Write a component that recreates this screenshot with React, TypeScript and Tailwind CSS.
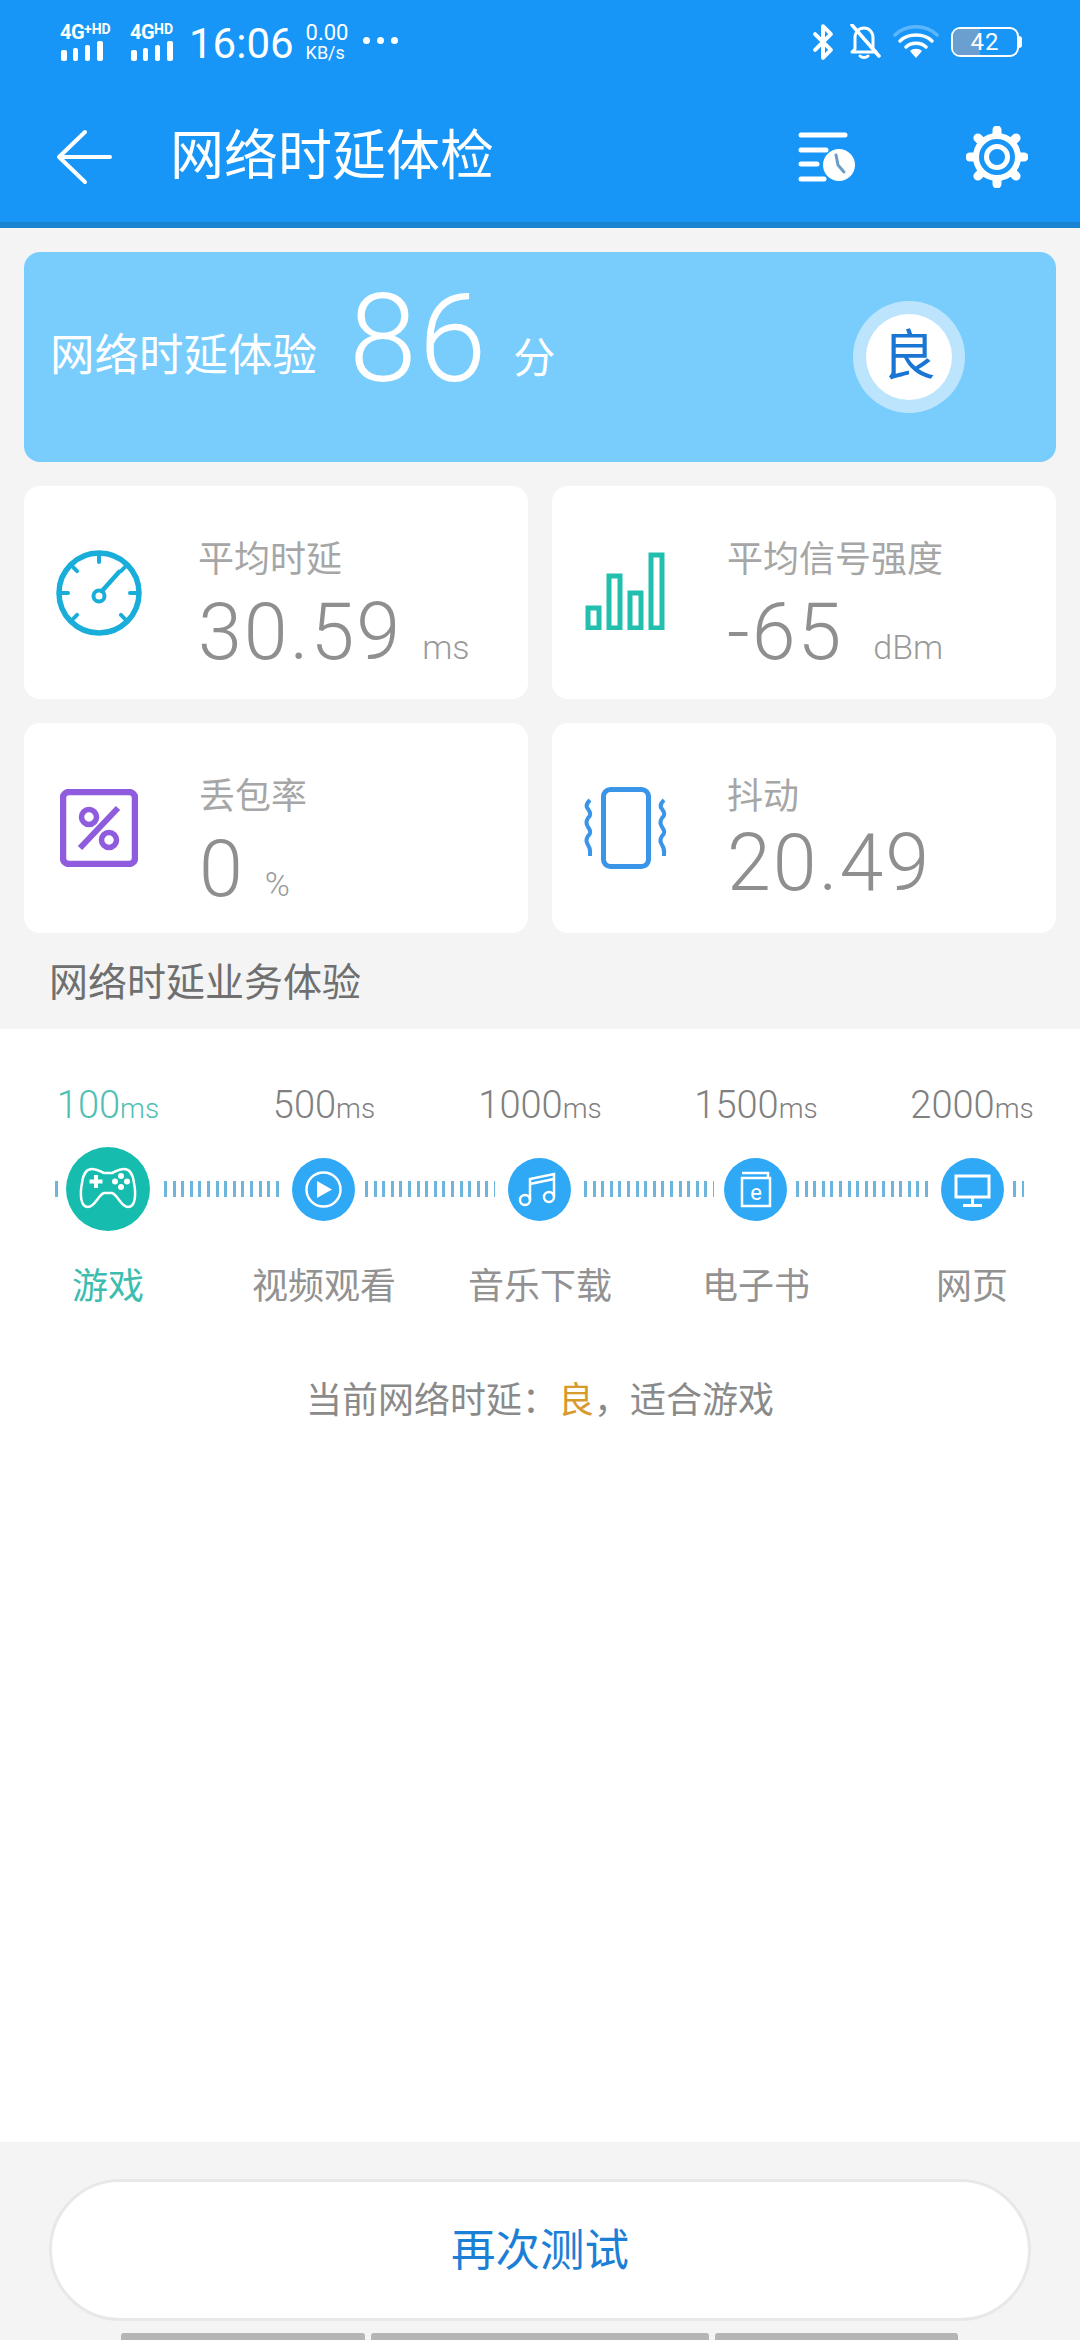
import { Bluetooth } from "lucide-react";

const TICKS =
  "h-4 bg-[repeating-linear-gradient(90deg,#6db5dc_0_3px,transparent_3px_8.6px)]";

function SignalBars() {
  return (
    <svg width="44" height="22" viewBox="0 0 44 22" fill="white">
      <rect x="1" y="10" width="6" height="11" rx="2" />
      <rect x="13" y="8" width="5" height="13" rx="2" />
      <rect x="25" y="5" width="5" height="16" rx="2" />
      <rect x="37" y="1" width="6" height="20" rx="2" />
    </svg>
  );
}

function BellOff() {
  return (
    <svg width="32" height="36" viewBox="0 0 32 36" fill="none" stroke="white" strokeWidth="3" strokeLinecap="round">
      <path d="M6 25V14C6 8 10 4 15 4C20 4 24 8 24 14V25L27 28H3Z" strokeLinejoin="round" />
      <path d="M11 32C13 34 17 34 19 32" />
      <path d="M3 1L30 32" strokeWidth="3.5" />
    </svg>
  );
}

function Wifi() {
  return (
    <svg width="46" height="36" viewBox="0 0 46 36" fill="none" strokeLinecap="round" strokeWidth="3.5">
      <path d="M2 11C13 0 33 0 44 11" stroke="#5cb6fb" />
      <path d="M7 17C15 9 31 9 39 17" stroke="white" />
      <path d="M13 23C18 18 28 18 33 23" stroke="white" />
      <path d="M17 27C20 24 26 24 29 27L23 34Z" fill="white" stroke="none" />
    </svg>
  );
}

function Battery() {
  return (
    <div className="flex items-center">
      <div className="relative flex h-[30px] w-[68px] items-center justify-center overflow-hidden rounded-[9px] border-2 border-white">
        <div className="absolute inset-y-0 left-0 w-[27px] bg-[#6b9fcf]" />
        <span className="relative text-[24px] leading-none tracking-[1px] text-white">42</span>
      </div>
      <div className="h-3 w-[3px] rounded-r-sm bg-white" />
    </div>
  );
}

function HistoryIcon() {
  return (
    <svg width="58" height="50" viewBox="0 0 58 50" fill="none">
      <g stroke="white" strokeWidth="5" strokeLinecap="round">
        <path d="M3 3H47" />
        <path d="M3 18H28" />
        <path d="M3 32H19" />
        <path d="M3 47H26" />
      </g>
      <circle cx="41" cy="33" r="16" fill="white" />
      <path d="M38 23L40 33L46 40" stroke="#6a9ec9" strokeWidth="3" fill="none" strokeLinecap="round" />
    </svg>
  );
}

function GearIcon() {
  const angles = [0, 45, 90, 135, 180, 225, 270, 315];
  return (
    <svg width="62" height="62" viewBox="0 0 62 62" fill="none" stroke="white">
      {angles.map((a) => (
        <path key={a} d="M31 4V10" strokeWidth="9" strokeLinecap="round" transform={`rotate(${a} 31 31)`} />
      ))}
      <circle cx="31" cy="31" r="21" strokeWidth="6" fill="#1796f8" />
      <circle cx="31" cy="31" r="10.5" strokeWidth="5" />
    </svg>
  );
}

function GaugeIcon() {
  const marks = [0, 45, 90, 135, 225, 270, 315];
  return (
    <svg width="86" height="86" viewBox="0 0 86 86" fill="none" stroke="#19aeda" strokeLinecap="round">
      <circle cx="43" cy="43" r="40" strokeWidth="5.5" />
      {marks.map((a) => (
        <path key={a} d="M43 5V12" strokeWidth="4" transform={`rotate(${a} 43 43)`} />
      ))}
      <circle cx="43" cy="46" r="5.5" strokeWidth="4" />
      <path d="M46 41L63 22" strokeWidth="4.5" />
    </svg>
  );
}

function BarsIcon() {
  return (
    <svg width="80" height="78" viewBox="0 0 80 78" fill="none" stroke="#22bfae" strokeWidth="5">
      <rect x="3" y="56" width="11" height="20" />
      <rect x="24" y="24" width="11" height="52" />
      <rect x="45" y="41" width="11" height="35" />
      <rect x="66" y="3" width="11" height="73" />
    </svg>
  );
}

function PercentIcon() {
  return (
    <svg width="78" height="78" viewBox="0 0 78 78" fill="none" stroke="#8e5cdc" strokeWidth="6.5">
      <rect x="3" y="3" width="72" height="72" rx="6" />
      <circle cx="29" cy="28" r="7.5" strokeWidth="5.5" />
      <circle cx="49" cy="51" r="7.5" strokeWidth="5.5" />
      <path d="M58 19L20 59" strokeWidth="6" />
    </svg>
  );
}

function PhoneIcon() {
  const squiggle = "M6 0C2 4 2 7 4 9C7 13 7 15 4 18C2 21 2 24 4 27C7 31 7 33 4 36C2 39 2 42 4 45C7 49 6 52 6 56";
  return (
    <svg width="86" height="82" viewBox="0 0 86 82" fill="none" stroke="#3a94e8" strokeLinejoin="round">
      <rect x="20.5" y="2.5" width="45" height="77" rx="7" strokeWidth="5" />
      <path d={squiggle} transform="translate(1 13)" strokeWidth="4" />
      <path d={squiggle} transform="translate(75 13)" strokeWidth="4" />
    </svg>
  );
}

function GameIcon() {
  return (
    <svg width="84" height="84" viewBox="0 0 84 84" fill="none" stroke="white">
      <path
        d="M26 22C32 22 35 25 38 26H46C49 25 52 22 58 22C64 22 67 28 68 36C70 46 70 60 62 60C55 60 52 48 46 46H38C32 48 29 60 22 60C14 60 14 46 16 36C17 28 20 22 26 22Z"
        strokeWidth="2.5"
      />
      <path d="M30 28V41M23.5 34.5H36.5" strokeWidth="4" />
      <g fill="white" stroke="none">
        <circle cx="55" cy="29" r="3" />
        <circle cx="55" cy="40" r="3" />
        <circle cx="49" cy="34.5" r="3" />
        <circle cx="61" cy="34.5" r="3" />
      </g>
    </svg>
  );
}

function PlayIcon() {
  return (
    <svg width="63" height="63" viewBox="0 0 63 63" fill="none" stroke="white">
      <circle cx="31.5" cy="31.5" r="17" strokeWidth="2.5" />
      <path d="M25 23V40L40 31.5Z" fill="white" stroke="none" />
    </svg>
  );
}

function MusicIcon() {
  return (
    <svg width="63" height="63" viewBox="0 0 63 63" fill="none" stroke="white" strokeWidth="2.5">
      <path d="M22 42V21L46 16V38" />
      <path d="M22 26L46 21" />
      <circle cx="17" cy="42" r="5" />
      <circle cx="41" cy="39" r="5" />
    </svg>
  );
}

function BookIcon() {
  return (
    <svg width="63" height="63" viewBox="0 0 63 63" fill="none" stroke="white" strokeWidth="2.5">
      <path d="M18 15H44V20" />
      <rect x="18" y="20" width="28" height="28" />
      <text x="32" y="42" fill="white" stroke="none" fontSize="22" textAnchor="middle">
        e
      </text>
    </svg>
  );
}

function MonitorIcon() {
  return (
    <svg width="63" height="63" viewBox="0 0 63 63" fill="none" stroke="white" strokeWidth="3">
      <rect x="15" y="18" width="33" height="21" />
      <path d="M31.5 40V47M22 47.5H41" />
    </svg>
  );
}

function MetricCard({
  icon,
  label,
  value,
  unit,
  iconBox,
  valueGap = "mt-[21px]",
  unitGap = "ml-5",
}: {
  icon: React.ReactNode;
  label: string;
  value: string;
  unit?: string;
  iconBox: string;
  valueGap?: string;
  unitGap?: string;
}) {
  return (
    <div className="flex items-center rounded-[16px] bg-white">
      <div className={iconBox}>{icon}</div>
      <div className="flex flex-col self-start pt-[54px]">
        <span className="text-[36px] leading-[40px] text-[#a6a6a6]">{label}</span>
        <div className={`${valueGap} flex items-baseline`}>
          <span className="text-[79px] font-light leading-[62px] tracking-[2px] text-[#8f8f8f]">{value}</span>
          {unit && <span className={`${unitGap} text-[34px] font-light leading-none text-[#9a9a9a]`}>{unit}</span>}
        </div>
      </div>
    </div>
  );
}

const services = [
  { ms: "100", name: "游戏", active: true },
  { ms: "500", name: "视频观看" },
  { ms: "1000", name: "音乐下载" },
  { ms: "1500", name: "电子书" },
  { ms: "2000", name: "网页" },
];

export default function App() {
  return (
    <div
      lang="zh-CN"
      className="flex h-[2340px] w-[1080px] flex-col overflow-hidden bg-[#f4f4f4] font-['Roboto','Noto_Sans_CJK_SC',sans-serif]"
    >
      {/* Blue header with status bar */}
      <header className="h-[228px] shrink-0 border-b-[6px] border-[#1a84d2] bg-[#1796f8] text-white">
        <div className="flex h-[84px] items-center pl-[60px] pr-[58px]">
          <div className="flex w-[58px] flex-col">
            <div className="flex h-[18px] items-start whitespace-nowrap font-bold leading-none">
              <span className="text-[20px] tracking-[-0.5px]">4G</span>
              <span className="text-[14px]">+HD</span>
            </div>
            <SignalBars />
          </div>
          <div className="ml-[12px] flex w-[46px] flex-col">
            <div className="flex h-[18px] items-start whitespace-nowrap font-bold leading-none">
              <span className="text-[20px] tracking-[-0.5px]">4G</span>
              <span className="text-[14px]">HD</span>
            </div>
            <SignalBars />
          </div>
          <span className="ml-[13px] mt-[3px] text-[42px] leading-none">16:06</span>
          <div className="ml-[12px] flex flex-col">
            <span className="text-[22px] leading-[22px]">0.00</span>
            <span className="text-[18px] leading-[18px]">KB/s</span>
          </div>
          <span className="ml-[14px] mb-[4px] flex gap-[7px]">
            <span className="size-[7px] rounded-full bg-white" />
            <span className="size-[7px] rounded-full bg-white" />
            <span className="size-[7px] rounded-full bg-white" />
          </span>
          <div className="ml-auto flex items-center gap-[12px]">
            <Bluetooth size={38} strokeWidth={2.5} className="-mr-[5px]" />
            <BellOff />
            <Wifi />
            <Battery />
          </div>
        </div>
        <div className="flex h-[138px] items-center pt-[8px] pl-[56px] pr-[52px]">
          <svg width="56" height="56" viewBox="0 0 56 56" fill="none" stroke="white" strokeWidth="4" strokeLinecap="round" strokeLinejoin="round">
            <path d="M54 28H3M29 3L3 28L29 53" />
          </svg>
          <h1 className="ml-[58px] text-[54px] font-normal leading-none">网络时延体检</h1>
          <div className="ml-auto flex items-center gap-[110px]">
            <HistoryIcon />
            <GearIcon />
          </div>
        </div>
      </header>

      <main className="flex flex-1 flex-col">
        <div className="flex flex-col gap-6 px-6 pt-6">
          {/* Score card */}
          <section className="flex h-[210px] items-start rounded-[16px] bg-[#78cdfd] pl-[26px] text-white">
            <span className="mt-[82px] text-[44.5px] leading-none">网络时延体验</span>
            <span className="ml-[32px] mt-[27px] text-[122px] font-light leading-none tracking-[2px]">86</span>
            <span className="ml-[25px] mt-[86px] text-[42px] leading-none">分</span>
            <div className="ml-auto mr-[91px] flex size-[112px] items-center justify-center self-center rounded-full bg-[#bce5fd]">
              <div className="flex size-[86px] items-center justify-center rounded-full bg-white text-[54px] leading-none text-[#1976d2]">
                良
              </div>
            </div>
          </section>

          <div className="grid grid-cols-2 grid-rows-[213px_210px] gap-6">
            <MetricCard icon={<GaugeIcon />} label="平均时延" value="30.59" unit="ms" iconBox="ml-[32px] mr-[56px]" />
            <MetricCard icon={<BarsIcon />} label="平均信号强度" value="-65" unit="dBm" iconBox="mb-[3px] ml-[33px] mr-[62px]" unitGap="ml-[30px]" />
            <MetricCard icon={<PercentIcon />} label="丢包率" value="0" unit="%" iconBox="ml-[36px] mr-[61px]" />
            <MetricCard icon={<PhoneIcon />} label="抖动" value="20.49" iconBox="ml-[31px] mr-[58px]" valueGap="mt-[15px]" />
          </div>
        </div>

        <h2 className="flex h-[96px] items-center pt-[4px] pl-[49px] text-[39px] font-normal leading-none text-[#6f6f6f]">
          网络时延业务体验
        </h2>

        {/* Service latency scale */}
        <section className="flex flex-1 flex-col bg-white pt-[57px]">
          <div className="grid h-[37px] grid-cols-5">
            {services.map((s) => (
              <div
                key={s.ms}
                className={`flex items-baseline justify-center font-light leading-none ${s.active ? "text-[#4fbfb2]" : "text-[#808080]"}`}
              >
                <span className="text-[38px]">{s.ms}</span>
                <span className="text-[28px]">ms</span>
              </div>
            ))}
          </div>
          <div className="mt-[24px] flex h-[84px] items-center pl-[55px]">
            <div className={`${TICKS} w-[3px]`} />
            <div className="ml-[8px] flex size-[84px] items-center justify-center rounded-full bg-[#16bcae]">
              <GameIcon />
            </div>
            <div className={`${TICKS} ml-[14px] w-[119px]`} />
            <div className="ml-[9px] size-[63px] rounded-full bg-[#2fa8f5]">
              <PlayIcon />
            </div>
            <div className={`${TICKS} ml-[10px] w-[130px]`} />
            <div className="ml-[13px] size-[63px] rounded-full bg-[#2fa8f5]">
              <MusicIcon />
            </div>
            <div className={`${TICKS} ml-[13px] w-[130px]`} />
            <div className="ml-[10px] size-[63px] rounded-full bg-[#2fa8f5]">
              <BookIcon />
            </div>
            <div className={`${TICKS} ml-[9px] w-[135px]`} />
            <div className="ml-[10px] size-[63px] rounded-full bg-[#2fa8f5]">
              <MonitorIcon />
            </div>
            <div className={`${TICKS} ml-[9px] w-[11px]`} />
          </div>
          <div className="mt-[38px] grid grid-cols-5">
            {services.map((s) => (
              <span
                key={s.name}
                className={`text-center text-[36px] leading-none ${s.active ? "text-[#3cbdb0]" : "text-[#929292]"}`}
              >
                {s.name}
              </span>
            ))}
          </div>
          <p className="mt-[78px] text-center text-[36px] leading-none text-[#8a8a8a]">
            当前网络时延：<span className="text-[#d79a2c]">良</span>，适合游戏
          </p>
        </section>

        {/* Retest button and nav pill */}
        <footer className="flex h-[198px] shrink-0 flex-col pt-[37px]">
          <button className="mx-[49px] h-[142px] rounded-full border-[3px] border-[#e8e8e8] bg-white pt-[2px] text-[44.5px] leading-none text-[#1b7fd6]">
            再次测试
          </button>
          <div className="mx-[121px] mt-[12px] flex h-[7px] gap-[6px]">
            <div className="w-[244px] rounded-t-[3px] bg-[#b5b5b5]" />
            <div className="w-[338px] rounded-t-[3px] bg-[#b5b5b5]" />
            <div className="w-[243px] rounded-t-[3px] bg-[#b5b5b5]" />
          </div>
        </footer>
      </main>
    </div>
  );
}
